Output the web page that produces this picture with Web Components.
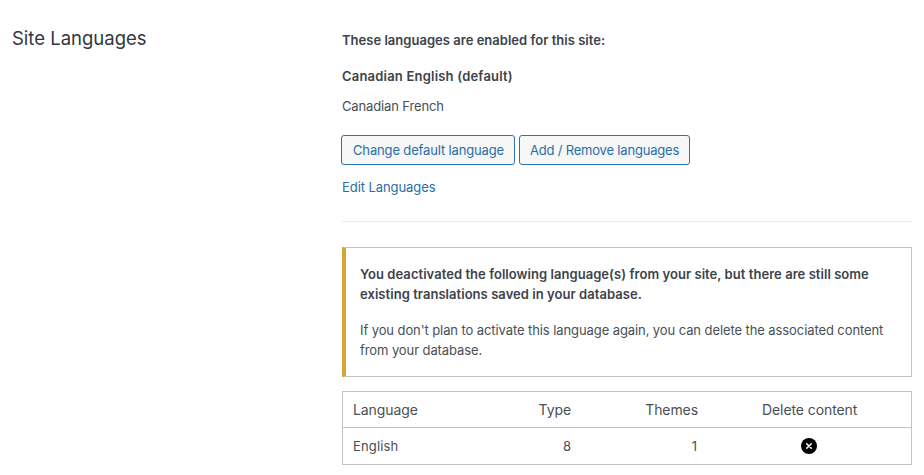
<!DOCTYPE html>
<html>
<head>
<meta charset="utf-8">
<style>
  html, body { margin: 0; padding: 0; background: #fff; }
  body { font: 13px/20px Inter, "Liberation Sans", sans-serif; color: #484f55; height: 475px; overflow: hidden; }
</style>
</head>
<body>
<site-languages>
  <span slot="title">Site Languages</span>
  <p style="margin:0 0 16px;font-weight:600;letter-spacing:.02px;color:#3c434a">These languages are enabled for this site:</p>
  <p style="margin:0 0 10px;font-weight:600;letter-spacing:.2px;color:#3c434a">Canadian English (default)</p>
  <p style="margin:0 0 19px;letter-spacing:-.13px">Canadian French</p>
  <wp-actions></wp-actions>
  <wp-notice></wp-notice>
  <language-table></language-table>
</site-languages>

<script>
class SiteLanguages extends HTMLElement {
    constructor() {
        super();
        this.attachShadow({ mode: 'open' });
        this.shadowRoot.innerHTML = `
            <style>
                :host { display: grid; grid-template-columns: 330px 570px; padding: 0 12px; }
                h2 { margin: 0; padding-top: 26px; font-size: 18.5px; line-height: 24px; font-weight: 400; color: #32373c; }
                .content { padding-top: 30px; }
            </style>
            <h2><slot name="title"></slot></h2>
            <div class="content"><slot></slot></div>
        `;
    }
}

class WpActions extends HTMLElement {
    constructor() {
        super();
        this.attachShadow({ mode: 'open' });
        this.shadowRoot.innerHTML = `
            <style>
                :host { display: block; border-bottom: 1px solid #eaeaea; padding-bottom: 24px; margin-bottom: 25px; }
                .row { display: flex; gap: 4px; margin-left: -1px; margin-bottom: 12px; }
                .btn { box-sizing: border-box; height: 30px; line-height: 28px; padding: 0 10px; border: 1px solid #2c72ab; border-radius: 3px; background: #f6f7f7; color: #2a6ea6; text-decoration: none; white-space: nowrap; letter-spacing: -.15px; }
                .btn.wide { padding-left: 11px; }
                .btn.tight { letter-spacing: -.19px; }
                a.link { color: #2a6ea6; text-decoration: none; display: block; letter-spacing: -.07px; }
            </style>
            <div class="row">
                <a class="btn wide" href="#">Change default language</a>
                <a class="btn tight" href="#">Add / Remove languages</a>
            </div>
            <a class="link" href="#">Edit Languages</a>
        `;
    }
}

class WpNotice extends HTMLElement {
    constructor() {
        super();
        this.attachShadow({ mode: 'open' });
        this.shadowRoot.innerHTML = `
            <style>
                :host { display: block; box-sizing: border-box; height: 130px; border: 1px solid #c3c4c7; border-left: 4px solid #d8a635; padding: 16px 14px; margin-bottom: 14px; background: #fff; }
                p { margin: 0; }
                .first { font-weight: 600; margin-bottom: 16px; letter-spacing: .05px; color: #3c434a; }
                .second { letter-spacing: -.09px; }
            </style>
            <p class="first">You deactivated the following language(s) from your site, but there are still some existing translations saved in your database.</p>
            <p class="second">If you don't plan to activate this language again, you can delete the associated content from your database.</p>
        `;
    }
}

class LanguageTable extends HTMLElement {
    constructor() {
        super();
        this.attachShadow({ mode: 'open' });
        this.shadowRoot.innerHTML = `
            <style>
                :host { display: block; box-sizing: border-box; border: 1px solid #c3c4c7; }
                .row { display: grid; grid-template-columns: 148px 70px 127px 1fr; align-items: center; height: 36px; padding-left: 10px; }
                .head { height: 35px; border-bottom: 1px solid #c3c4c7; font-size: 14px; letter-spacing: -.09px; }
                .num { text-align: right; }
                .del { display: flex; justify-content: center; padding-left: 63px; width: 95px; }
                .del-head { padding-left: 64px; white-space: nowrap; }
                svg { display: block; }
            </style>
            <div class="row head">
                <span>Language</span><span class="num">Type</span><span class="num">Themes</span><span class="del-head">Delete content</span>
            </div>
            <div class="row">
                <span style="letter-spacing:.15px">English</span><span class="num">8</span><span class="num" style="padding-right:1px">1</span>
                <span class="del">
                    <svg width="16" height="16" viewBox="0 0 16 16"><circle cx="8" cy="8" r="8" fill="#000"/><path d="M5.7 5.7l4.6 4.6M10.3 5.7l-4.6 4.6" stroke="#fff" stroke-width="1.5" stroke-linecap="round"/></svg>
                </span>
            </div>
        `;
    }
}

customElements.define('site-languages', SiteLanguages);
customElements.define('wp-actions', WpActions);
customElements.define('wp-notice', WpNotice);
customElements.define('language-table', LanguageTable);
</script>
</body>
</html>
